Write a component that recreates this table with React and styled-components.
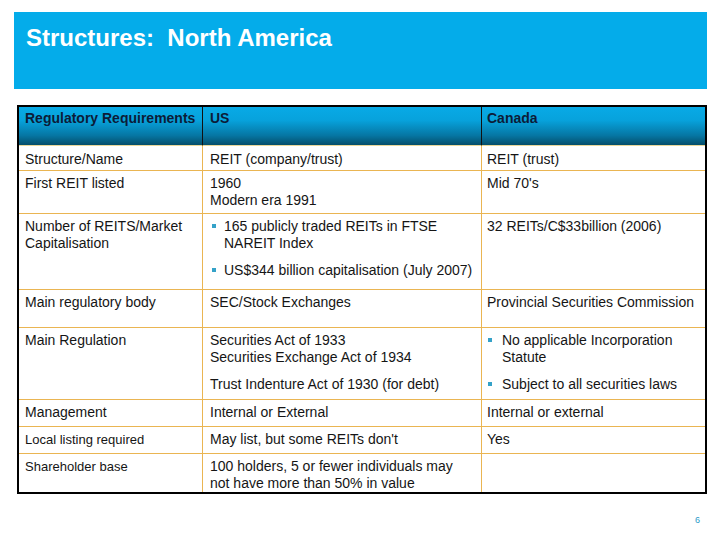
import React from "react";
import styled, { createGlobalStyle } from "styled-components";

const Global = createGlobalStyle`
  html, body { margin: 0; padding: 0; background: #ffffff; }
  body { font-family: "Liberation Sans", Arial, sans-serif; color: #111; }
`;

const Page = styled.div`
  width: 720px;
  height: 540px;
  position: relative;
  padding-top: 12px;
  box-sizing: border-box;
`;

const TitleBar = styled.header`
  margin-left: 14px;
  width: 693px;
  height: 77px;
  background: #04acea;
  box-sizing: border-box;
  padding: 12px 0 0 12px;
`;

const Title = styled.h1`
  margin: 0;
  font-size: 24px;
  line-height: 28px;
  font-weight: bold;
  color: #ffffff;
  white-space: pre;
`;

const Table = styled.div`
  margin: 16px 0 0 17px;
  width: 690px;
  box-sizing: border-box;
  border: 2px solid #000;
  display: grid;
  grid-template-columns: 183px 279px 1fr;
`;

const HeadCell = styled.div`
  height: 39px;
  box-sizing: border-box;
  padding: 3px 6px 0 ${(p) => p.$pl || 6}px;
  background: linear-gradient(to bottom, #08aae6 0%, #07a2dc 35%, #0676a3 75%, #054e6a 100%);
  border-left: ${(p) => (p.$first ? "none" : "1px solid #111")};
  border-bottom: 1px solid #e9d79a;
  font-size: 14px;
  line-height: 17px;
  font-weight: bold;
  color: #0c1c38;
`;

const Cell = styled.div`
  height: ${(p) => p.$h}px;
  box-sizing: border-box;
  padding: ${(p) => (p.$first ? 5 : 4)}px 4px 0 ${(p) => p.$pl || 6}px;
  border-top: ${(p) => (p.$first ? "none" : "1px solid #eab552")};
  border-left: ${(p) => (p.$col ? "1px solid #eab552" : "none")};
  font-size: ${(p) => p.$fs || 14}px;
  line-height: 17px;
  color: #151515;
`;

const Para = styled.div`
  & + & { margin-top: 10px; }
`;

const Bullet = styled.div`
  position: relative;
  padding-left: ${(p) => p.$indent}px;
  & + & { margin-top: 10px; }
  &::before {
    content: "";
    position: absolute;
    left: ${(p) => p.$dot}px;
    top: 6px;
    width: 4px;
    height: 4px;
    background: #35a2c8;
  }
`;

const PageNum = styled.div`
  position: absolute;
  left: 695px;
  top: 515px;
  font-size: 9px;
  color: #2c9ac8;
`;

const rows = [
  { h: 24, a: "Structure/Name", b: ["REIT (company/trust)"], c: ["REIT (trust)"] },
  { h: 43, a: "First REIT listed", b: [["1960", "Modern era 1991"]], c: ["Mid 70's"] },
  {
    h: 76,
    a: "Number of REITS/Market Capitalisation",
    bBul: ["165 publicly traded REITs in FTSE NAREIT Index", "US$344 billion capitalisation (July 2007)"],
    c: ["32 REITs/C$33billion (2006)"],
  },
  { h: 38, a: "Main regulatory body", b: ["SEC/Stock Exchanges"], c: ["Provincial Securities Commission"] },
  {
    h: 72,
    a: "Main Regulation",
    b: [["Securities Act of 1933", "Securities Exchange Act of 1934"], "Trust Indenture Act of 1930 (for debt)"],
    cBul: ["No applicable Incorporation Statute", "Subject to all securities laws"],
  },
  { h: 27, a: "Management", b: ["Internal or External"], c: ["Internal or external"] },
  { h: 27, a: "Local listing required", fs: 13, b: ["May list, but some REITs don't"], c: ["Yes"] },
  {
    h: 39,
    a: "Shareholder base",
    fs: 13,
    b: [["100 holders, 5 or fewer individuals may", "not have more than 50% in value"]],
    c: [],
  },
];

const renderParas = (list) =>
  list.map((p, i) => (
    <Para key={i}>
      {Array.isArray(p) ? p.map((l, j) => <div key={j}>{l}</div>) : p}
    </Para>
  ));

export default function App() {
  return (
    <Page>
      <Global />
      <TitleBar>
        <Title>{"Structures:  North America"}</Title>
      </TitleBar>
      <Table>
        <HeadCell $first>Regulatory Requirements</HeadCell>
        <HeadCell $pl={7}>US</HeadCell>
        <HeadCell $pl={5}>Canada</HeadCell>
        {rows.map((r, i) => (
          <React.Fragment key={i}>
            <Cell $h={r.h} $first={i === 0} $fs={r.fs}>
              {r.a}
            </Cell>
            <Cell $h={r.h} $first={i === 0} $col $pl={7}>
              {r.bBul
                ? r.bBul.map((t, j) => (
                    <Bullet key={j} $indent={14} $dot={2}>
                      {t}
                    </Bullet>
                  ))
                : renderParas(r.b)}
            </Cell>
            <Cell $h={r.h} $first={i === 0} $col $pl={5}>
              {r.cBul
                ? r.cBul.map((t, j) => (
                    <Bullet key={j} $indent={15} $dot={1}>
                      {t}
                    </Bullet>
                  ))
                : renderParas(r.c)}
            </Cell>
          </React.Fragment>
        ))}
      </Table>
      <PageNum>6</PageNum>
    </Page>
  );
}
